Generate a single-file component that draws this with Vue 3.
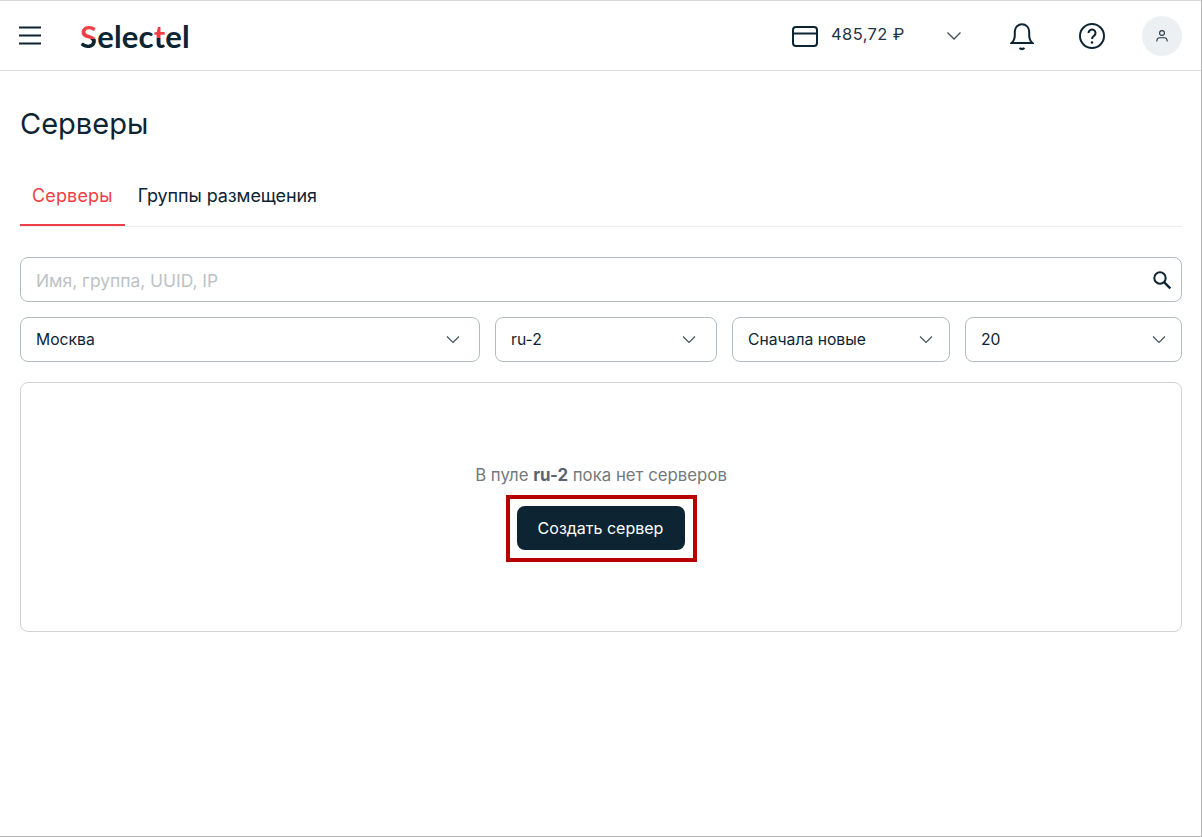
<template>
  <div class="shell">
    <header class="topbar">
      <button class="icon-btn burger" aria-label="Меню">
        <svg width="24" height="24" viewBox="0 0 24 24"><path d="M1 3.500h22M1 11.500h22M1 19.500h22" stroke="#0d2433" stroke-width="2.200" fill="none"/></svg>
      </button>
      <div class="logo"><span class="logo-s">S</span>elec<span class="logo-t">t</span>el</div>
      <div class="spacer"></div>
      <svg class="card" width="28" height="24" viewBox="0 0 28 24" fill="none" stroke="#0d2433" stroke-width="2"><rect x="2" y="3" width="24" height="19" rx="3"/><path d="M2 9.500h24"/></svg>
      <span class="balance">485,72 ₽</span>
      <svg class="bal-chev" width="16" height="10" viewBox="0 0 16 10" fill="none" stroke="#3d4e59" stroke-width="1.300"><path d="M1.500 1.500 8 8l6.500-6.500"/></svg>
      <svg class="bell" width="24" height="30" viewBox="0 0 24 30" fill="none" stroke="#0d2433" stroke-width="2"><path d="M1.500 22c2.500-2 3.300-4 3.300-8v-3.500a7.200 7.200 0 0 1 14.400 0V14c0 4 .8 6 3.300 8zM1 22h22"/><path d="M9.500 27c1.500 1.200 3.500 1.200 5 0" stroke-width="2.200"/></svg>
      <svg class="help" width="28" height="28" viewBox="0 0 28 28" fill="none" stroke="#0d2433" stroke-width="2"><circle cx="14" cy="14" r="12"/><path d="M10.500 11a3.500 3.500 0 1 1 5.500 2.900c-1.300.9-2 1.500-2 3"/><circle cx="14" cy="20.500" r="1.300" fill="#0d2433" stroke="none"/></svg>
      <div class="avatar">
        <svg width="14" height="14" viewBox="0 0 14 14" fill="none" stroke="#1f3543" stroke-width="1.100"><circle cx="7" cy="4" r="2.400"/><path d="M1.800 12.500c0-2.500 1.500-3.700 3-3.700h4.400c1.500 0 3 1.200 3 3.700"/></svg>
      </div>
    </header>

    <main class="page">
      <h1>Серверы</h1>

      <nav class="tabs">
        <a class="tab active">Серверы</a>
        <a class="tab">Группы размещения</a>
      </nav>

      <div class="search">
        <span class="placeholder">Имя, группа, UUID, IP</span>
        <svg width="20" height="20" viewBox="0 0 20 20" fill="none" stroke="#0d2433"><circle cx="8" cy="8" r="5.700" stroke-width="2"/><path d="m12.300 12.300 6 6" stroke-width="2.400"/></svg>
      </div>

      <div class="filters">
        <div v-for="f in filters" :key="f" class="select">
          <span>{{ f }}</span>
          <svg width="14" height="9" viewBox="0 0 14 9" fill="none" stroke="#3d4e59" stroke-width="1.100"><path d="M1 1.500 7 7.500l6-6"/></svg>
        </div>
      </div>

      <section class="empty">
        <p>В пуле <b>ru-2</b> пока нет серверов</p>
        <div class="highlight">
          <button class="create">Создать сервер</button>
        </div>
      </section>
    </main>
  </div>
</template>

<script setup>
const filters = ['Москва', 'ru-2', 'Сначала новые', '20'];
</script>

<style>
html, body { margin: 0; background: #fff; }
</style>

<style scoped>
.shell {
  box-sizing: border-box;
  width: 1202px;
  height: 837px;
  border-top: 1px solid #d9d9d9;
  border-right: 1px solid #b5b5b5;
  border-bottom: 1px solid #b5b5b5;
  font-family: Inter, "Noto Sans", sans-serif;
  color: #0d2433;
  overflow: hidden;
}

.topbar {
  display: flex;
  align-items: center;
  height: 69px;
  padding: 0 19px 0 18px;
  border-bottom: 1px solid #dcdcdc;
}

.icon-btn {
  display: flex;
  padding: 0;
  border: none;
  background: none;
}

.logo {
  margin-left: 38px;
  font-family: Lato, Inter, sans-serif;
  font-size: 31px;
  font-weight: 700;
  letter-spacing: 0.2px;
  line-height: 36px;
}

.logo-s {
  background: linear-gradient(#ee3f46 58%, #0d2433 58%);
  -webkit-background-clip: text;
  background-clip: text;
  color: transparent;
}

.logo-t {
  background: linear-gradient(#ee3f46 56%, #0d2433 56%);
  -webkit-background-clip: text;
  background-clip: text;
  color: transparent;
}

.spacer { flex: 1; }

.balance {
  margin-left: 12px;
  margin-bottom: 3px;
  font-size: 16.500px;
  letter-spacing: 0.4px;
  width: 100px;
  color: #1f3543;
}

.bal-chev { margin-left: 15px; }
.bell { margin-left: 48px; }
.help { margin-left: 44px; }

.avatar {
  display: flex;
  align-items: center;
  justify-content: center;
  width: 40px;
  height: 40px;
  margin-left: 36px;
  border-radius: 50%;
  background: #edf0f2;
}

.page { padding: 0 19px 0 20px; }

h1 {
  margin: 35px 0 0;
  font-size: 29px;
  line-height: 36px;
  font-weight: 400;
}

.tabs {
  display: flex;
  height: 62px;
  margin-top: 23px;
  border-bottom: 1px solid #eceeef;
  box-sizing: border-box;
}

.tab {
  display: flex;
  align-items: center;
  padding: 1px 12px 0 13px;
  height: 58px;
  font-size: 18px;
  letter-spacing: -0.09px;
  box-sizing: content-box;
}

.tab.active {
  padding: 1px 12px 0;
  letter-spacing: 0.15px;
  color: #ee3f46;
  border-bottom: 2px solid #ee3f46;
}

.search, .select {
  display: flex;
  align-items: center;
  justify-content: space-between;
  box-sizing: border-box;
  border: 1px solid #b4bcc1;
  border-radius: 8px;
  font-size: 15.700px;
}

.search {
  height: 45px;
  margin-top: 30px;
  padding: 0 9px 0 15px;
}

.placeholder {
  margin-top: 1px;
  color: #bcc3c7;
  font-size: 17.400px;
}

.filters {
  display: grid;
  grid-template-columns: 460px 222px 218px 217px;
  gap: 15px;
  margin-top: 15px;
}

.select {
  height: 45px;
  padding: 0 15px;
}

.select:nth-child(1) { padding-right: 19px; }
.select:nth-child(2) { padding-right: 20px; }
.select:nth-child(3) { padding-right: 16px; }

.empty {
  display: flex;
  flex-direction: column;
  align-items: center;
  box-sizing: border-box;
  height: 250px;
  margin-top: 20px;
  padding-top: 80px;
  border: 1px solid #cfd3d6;
  border-radius: 8px;
}

.empty p {
  margin: 0;
  height: 24px;
  line-height: 24px;
  font-size: 16.800px;
  color: #74797d;
}

.empty b { color: #5a666e; font-weight: 700; }

.highlight {
  display: flex;
  margin-top: 8px;
  padding: 7px 8px 8px 7px;
  border: 4px solid #b80000;
}

.create {
  width: 168px;
  height: 44px;
  border: none;
  border-radius: 8px;
  background: #0d2433;
  color: #fff;
  font-family: inherit;
  font-size: 16px;
}
</style>
